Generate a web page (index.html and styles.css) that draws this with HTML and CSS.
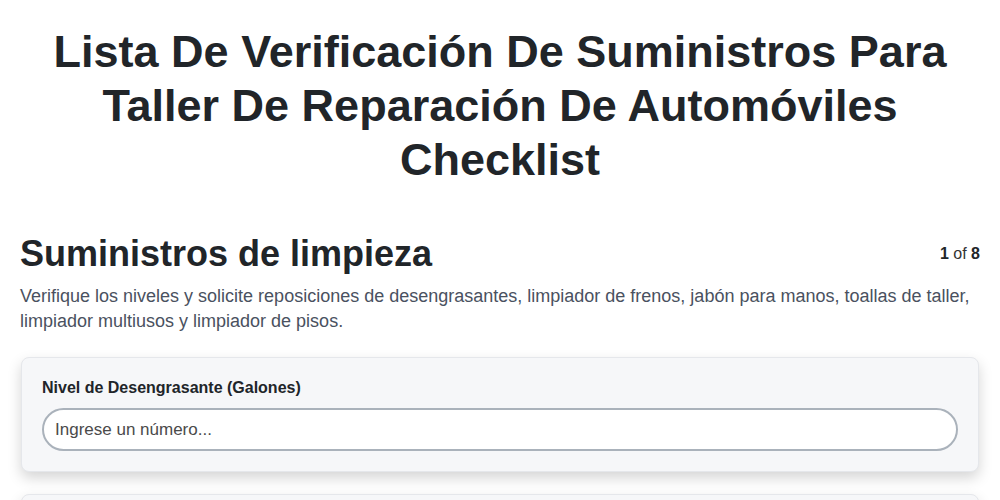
FILE: index.html
```html
<!DOCTYPE html>
<html>
<head>
    <title>Checklist</title>
    <link rel="stylesheet" href="styles.css">
</head>
<body>
    <h1 class="page-title">Lista De Verificación De Suministros Para Taller De Reparación De Automóviles Checklist</h1>

    <!-- Section -->
    <div class="section">
        <div class="section-head">
            <h2>Suministros de limpieza</h2>
            <span class="step"><b>1</b> of <b>8</b></span>
        </div>
        <p class="section-desc">Verifique los niveles y solicite reposiciones de desengrasantes, limpiador de frenos, jabón para manos, toallas de taller, limpiador multiusos y limpiador de pisos.</p>

        <div class="card">
            <label for="q1">Nivel de Desengrasante (Galones)</label>
            <input type="text" id="q1" placeholder="Ingrese un número...">
        </div>

        <div class="card">
            <label for="q2">Nivel de Limpiador de Frenos (Latas)</label>
            <input type="text" id="q2" placeholder="Ingrese un número...">
        </div>
    </div>
</body>
</html>
```

FILE: styles.css
```css
body {
    margin: 0;
    padding: 20px;
    font-family: 'Liberation Sans', Arial, sans-serif;
    color: #212529;
    background: #fff;
}

.page-title {
    margin: 5px 0 45px;
    text-align: center;
    font-size: 45px;
    line-height: 1.2;
    font-weight: bold;
}

/* Section header */
.section-head {
    display: flex;
    justify-content: space-between;
    align-items: center;
}
.section-head h2 {
    margin: 0;
    font-size: 36px;
    line-height: 1.2;
}
.step {
    font-size: 16px;
    color: #333;
}
.step b {
    color: #212529;
}

.section-desc {
    margin: 9px 0 23px;
    font-size: 18px;
    line-height: 25px;
    color: #4a5160;
}

/* Question card */
.card {
    background: #f6f7f9;
    border: 1px solid #e5e7eb;
    border-radius: 8px;
    box-shadow: 0 6px 14px rgba(0, 0, 0, 0.17);
    padding: 21px 20px 20px;
    margin: 0 1px 22px;
}
.card label {
    display: block;
    font-size: 16px;
    font-weight: bold;
    margin-bottom: 11px;
}
.card input {
    display: block;
    width: 100%;
    box-sizing: border-box;
    height: 43px;
    padding: 0 11px;
    border: 2px solid #aab2bb;
    border-radius: 22px;
    background: #fff;
    font-family: inherit;
    font-size: 17px;
    color: #212529;
}
.card input::placeholder {
    color: #4a4a4a;
}
```
